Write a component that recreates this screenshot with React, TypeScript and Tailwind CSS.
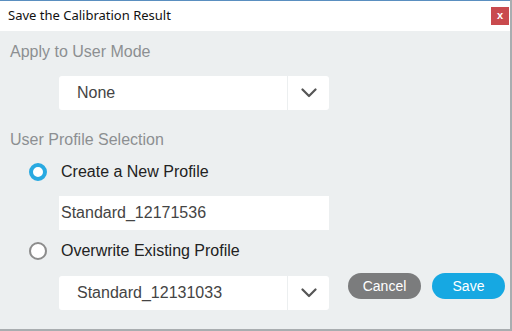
import React from 'react';

const Chevron: React.FC = () => (
  <svg width="16" height="10" viewBox="0 0 16 10" fill="none">
    <path d="M1.5 1.5 L8 8 L14.5 1.5" stroke="#555" strokeWidth="2.2" strokeLinecap="round" strokeLinejoin="round" />
  </svg>
);

const Select: React.FC<{ value: string }> = ({ value }) => (
  <div className="flex h-[34px] w-[270px] items-stretch rounded-[3px] bg-white">
    <div className="flex flex-1 items-center pl-[18px] text-[16px] text-[#444]">{value}</div>
    <div className="w-px bg-[#eceff0]" />
    <div className="flex w-[41px] items-center justify-center">
      <Chevron />
    </div>
  </div>
);

const App: React.FC = () => {
  return (
    <div
      className="flex h-[331px] w-[512px] flex-col overflow-hidden border-r-2 border-b-2 border-[#a9adb0] bg-[#eceff0]"
      style={{ fontFamily: '"Liberation Sans", Arial, sans-serif' }}
    >
      {/* Title bar */}
      <div className="flex h-[31px] shrink-0 items-center justify-between border-t border-[#5a8fc0] bg-white pl-[8px] pr-[1px]">
        <span className="text-[13px] text-[#111]" style={{ fontFamily: '"Noto Sans", "Open Sans", sans-serif' }}>
          Save the Calibration Result
        </span>
        <button className="flex h-[18px] w-[18px] items-center justify-center bg-[#c94a4e] pb-[2px] text-[11px] font-bold text-white">
          x
        </button>
      </div>

      <div className="flex flex-col pl-[10px]">
        <div className="mt-[11px] h-[20px] text-[16px] leading-[20px] text-[#8c8f92]">Apply to User Mode</div>
        <div className="mt-[14px] ml-[49px]">
          <Select value="None" />
        </div>

        <div className="mt-[20px] h-[20px] text-[16px] leading-[20px] text-[#8c8f92]">User Profile Selection</div>

        <div className="mt-[12px] ml-[19px] flex h-[20px] items-center gap-[14px]">
          <span className="h-[18px] w-[18px] rounded-full border-[4px] border-[#28a9e1] bg-white" />
          <span className="text-[16px] text-[#222]">Create a New Profile</span>
        </div>

        <div className="mt-[14px] ml-[49px] flex h-[34px] w-[270px] items-center bg-white pl-[2px] text-[16px] text-[#444]">
          Standard_12171536
        </div>

        <div className="mt-[11px] ml-[19px] flex h-[20px] items-center gap-[14px]">
          <span className="h-[18px] w-[18px] rounded-full border-2 border-[#8c8c8c] bg-white" />
          <span className="text-[16px] text-[#222]">Overwrite Existing Profile</span>
        </div>

        <div className="mt-[15px] ml-[49px] flex items-start">
          <Select value="Standard_12131033" />
          <button className="ml-[19px] -mt-[3px] h-[26px] w-[73px] rounded-full bg-[#7b7c7d] text-[14px] text-white">
            Cancel
          </button>
          <button className="ml-[11px] -mt-[3px] h-[26px] w-[73px] rounded-full bg-[#16a8e2] text-[14px] text-white">
            Save
          </button>
        </div>
      </div>
    </div>
  );
};

export default App;
